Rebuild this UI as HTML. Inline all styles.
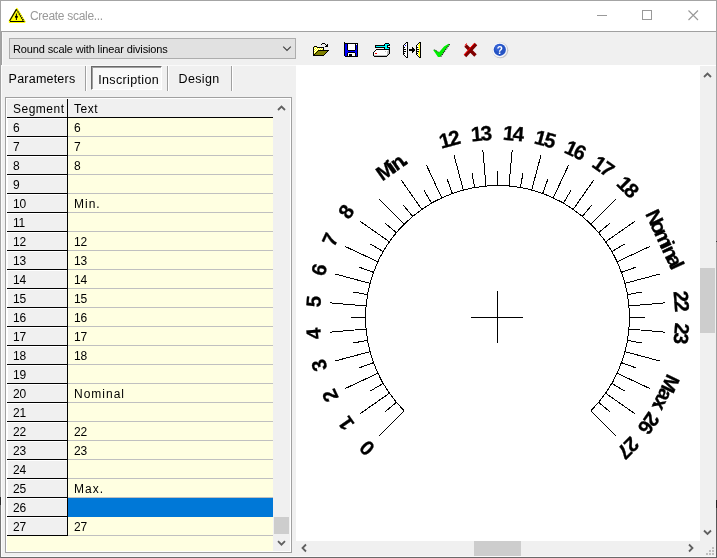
<!DOCTYPE html>
<html><head><meta charset="utf-8"><title>Create scale...</title>
<style>
html,body{margin:0;padding:0}
body{width:717px;height:558px;overflow:hidden;background:#f0f0f0;position:relative;font-family:"Liberation Sans",Arial,sans-serif;font-size:12px;color:#000}
#root{position:absolute;left:0;top:0;width:717px;height:558px;will-change:transform}
.abs,.dial,.icons{position:absolute}
.dial,.icons{left:0;top:0;pointer-events:none}
.win{position:absolute;left:0;top:0;width:715px;height:556px;border:1px solid #a4a4a4;border-bottom-color:#6a6a6a}
.title{position:absolute;left:1px;top:1px;width:715px;height:30px;background:#fff;border-bottom:1px solid #a0a0a0}
.title .t{position:absolute;left:29px;top:7px;font-size:12px;letter-spacing:-0.3px;color:#999;line-height:16px;white-space:nowrap}
.lb{position:absolute;left:1px;top:32px;width:1px;height:33px;background:#a0a0a0}
.lb2{position:absolute;left:2px;top:32px;width:1px;height:33px;background:#fafafa}
.combo{position:absolute;left:9px;top:38px;width:285px;height:19px;border:1px solid #adadad;background:#e1e1e1}
.combo .t{position:absolute;left:3px;top:4px;font-size:11px;letter-spacing:-.13px;line-height:13px;white-space:nowrap}
.tab{position:absolute;top:67px;height:24px;line-height:16px;font-size:12.5px;letter-spacing:.35px;white-space:nowrap}
.sep{position:absolute;top:66px;width:1px;height:25px;background:#a0a0a0;border-right:1px solid #fff}
.grid{position:absolute;left:5px;top:97px;width:285px;height:454px;border:1px solid #a0a0a0;background:#ffffe1}
.grid .in{position:absolute;left:0;top:0;right:0;bottom:0;border:1px solid #fff}
.hdr{position:absolute;top:99px;height:18px;background:#f0f0f0;border-bottom:1px solid #000;letter-spacing:.5px;line-height:20px}
.row{position:absolute;left:7px;width:266px;height:19px}
.seg{position:absolute;left:0;top:0;width:60px;height:18px;background:#f0f0f0;border-right:1px solid #000;border-bottom:1px solid #000;box-sizing:content-box;text-indent:6px;line-height:21px;letter-spacing:-.2px;box-shadow:inset 1px 1px 0 #fff}
.txt{position:absolute;left:61px;top:0;width:205px;height:18px;border-bottom:1px solid #c0c0c0;text-indent:6px;line-height:21px;letter-spacing:-.1px}
.txt.w{letter-spacing:1px}
.sel .txt{background:#0078d7;border-bottom-color:#0078d7}
.sb{position:absolute;background:#f0f0f0}
.thumb{position:absolute;background:#cdcdcd}
.panel{position:absolute;left:296px;top:65px;width:420px;height:476px;background:#fff}
</style></head><body><div id="root">
<div class="panel"></div>
<div class="title"><div class="t">Create scale...</div></div>
<div class="abs" style="left:1px;top:65px;width:295px;height:1px;background:#fafafa"></div>
<div class="lb"></div><div class="lb2"></div>
<div class="abs" style="left:1px;top:65px;width:1px;height:492px;background:#fcfcfc"></div>
<div class="combo"><div class="t">Round scale with linear divisions</div></div>
<div class="tab" style="left:8.6px;padding-top:4px;letter-spacing:.22px">Parameters</div>
<div class="sep" style="left:85px"></div>
<div class="abs" style="left:91px;top:66px;width:69px;height:22px;background:#f8f8f8;border:1px solid;border-color:#696969 #fff #fff #696969;box-shadow:inset 1px 1px 0 #a0a0a0"></div>
<div class="tab" style="left:98.2px;padding-top:5px">Inscription</div>
<div class="sep" style="left:167px"></div>
<div class="tab" style="left:178.5px;padding-top:4px">Design</div>
<div class="sep" style="left:231px"></div>
<div class="grid"><div class="in"></div></div>
<div class="hdr" style="left:7px;width:60px;border-right:1px solid #000;text-indent:6px">Segment</div>
<div class="hdr" style="left:68px;width:205px;text-indent:6px">Text</div>
<div class="row" style="top:118px"><div class="seg">6</div><div class="txt">6</div></div>
<div class="row" style="top:137px"><div class="seg">7</div><div class="txt">7</div></div>
<div class="row" style="top:156px"><div class="seg">8</div><div class="txt">8</div></div>
<div class="row" style="top:175px"><div class="seg">9</div><div class="txt"></div></div>
<div class="row" style="top:194px"><div class="seg">10</div><div class="txt w">Min.</div></div>
<div class="row" style="top:213px"><div class="seg">11</div><div class="txt"></div></div>
<div class="row" style="top:232px"><div class="seg">12</div><div class="txt">12</div></div>
<div class="row" style="top:251px"><div class="seg">13</div><div class="txt">13</div></div>
<div class="row" style="top:270px"><div class="seg">14</div><div class="txt">14</div></div>
<div class="row" style="top:289px"><div class="seg">15</div><div class="txt">15</div></div>
<div class="row" style="top:308px"><div class="seg">16</div><div class="txt">16</div></div>
<div class="row" style="top:327px"><div class="seg">17</div><div class="txt">17</div></div>
<div class="row" style="top:346px"><div class="seg">18</div><div class="txt">18</div></div>
<div class="row" style="top:365px"><div class="seg">19</div><div class="txt"></div></div>
<div class="row" style="top:384px"><div class="seg">20</div><div class="txt w">Nominal</div></div>
<div class="row" style="top:403px"><div class="seg">21</div><div class="txt"></div></div>
<div class="row" style="top:422px"><div class="seg">22</div><div class="txt">22</div></div>
<div class="row" style="top:441px"><div class="seg">23</div><div class="txt">23</div></div>
<div class="row" style="top:460px"><div class="seg">24</div><div class="txt"></div></div>
<div class="row" style="top:479px"><div class="seg">25</div><div class="txt w">Max.</div></div>
<div class="row sel" style="top:498px"><div class="seg">26</div><div class="txt"></div></div>
<div class="row" style="top:517px"><div class="seg">27</div><div class="txt">27</div></div>
<div class="sb" style="left:273px;top:99px;width:17px;height:452px"></div>
<div class="thumb" style="left:274px;top:517px;width:15px;height:17px"></div>
<div class="sb" style="left:700px;top:66px;width:16px;height:475px"></div>
<div class="thumb" style="left:700px;top:268px;width:15px;height:65px"></div>
<div class="sb" style="left:296px;top:541px;width:420px;height:15px"></div>
<div class="thumb" style="left:474px;top:541px;width:47px;height:15px"></div>
<svg class="dial" width="717" height="558" viewBox="0 0 717 558">
<g stroke="#000" stroke-width="1" fill="none" shape-rendering="crispEdges">
<path d="M404.16 410.84 A132 132 0 1 1 590.84 410.84"/>
<path d="M404.16 410.84L378.71 436.29M396.38 402.35L384.89 411.99M389.37 393.21L359.88 413.86M383.18 383.50L370.19 391.00M377.87 373.29L345.24 388.50M373.46 362.65L359.37 367.78M370.00 351.66L335.22 360.98M367.51 340.42L352.73 343.03M366.00 329.00L330.14 332.14M365.50 317.50L350.50 317.50M366.00 306.00L330.14 302.86M367.51 294.58L352.73 291.97M370.00 283.34L335.22 274.02M373.46 272.35L359.37 267.22M377.87 261.71L345.24 246.50M383.18 251.50L370.19 244.00M389.37 241.79L359.88 221.14M396.38 232.65L384.89 223.01M404.16 224.16L378.71 198.71M412.65 216.38L403.01 204.89M421.79 209.37L401.14 179.88M431.50 203.18L424.00 190.19M441.71 197.87L426.50 165.24M452.35 193.46L447.22 179.37M463.34 190.00L454.02 155.22M474.58 187.51L471.97 172.73M486.00 186.00L482.86 150.14M497.50 185.50L497.50 170.50M509.00 186.00L512.14 150.14M520.42 187.51L523.03 172.73M531.66 190.00L540.98 155.22M542.65 193.46L547.78 179.37M553.29 197.87L568.50 165.24M563.50 203.18L571.00 190.19M573.21 209.37L593.86 179.88M582.35 216.38L591.99 204.89M590.84 224.16L616.29 198.71M598.62 232.65L610.11 223.01M605.63 241.79L635.12 221.14M611.82 251.50L624.81 244.00M617.13 261.71L649.76 246.50M621.54 272.35L635.63 267.22M625.00 283.34L659.78 274.02M627.49 294.58L642.27 291.97M629.00 306.00L664.86 302.86M629.50 317.50L644.50 317.50M629.00 329.00L664.86 332.14M627.49 340.42L642.27 343.03M625.00 351.66L659.78 360.98M621.54 362.65L635.63 367.78M617.13 373.29L649.76 388.50M611.82 383.50L624.81 391.00M605.63 393.21L635.12 413.86M598.62 402.35L610.11 411.99M590.84 410.84L616.29 436.29"/>
<path d="M471 317.5H523M497.5 291V343"/>
</g>
<g font-family="Liberation Sans, Arial, sans-serif" font-weight="bold" font-size="20.5" fill="#000" stroke="#000" stroke-width="0.3">
<text transform="translate(371.99 443.01) rotate(-135)" x="-5.70">0</text>
<text transform="translate(352.10 419.31) rotate(-125)" x="-5.70">1</text>
<text transform="translate(336.63 392.51) rotate(-115)" x="-5.70">2</text>
<text transform="translate(326.05 363.44) rotate(-105)" x="-5.70">3</text>
<text transform="translate(320.68 332.97) rotate(-95)" x="-5.70">4</text>
<text transform="translate(320.68 302.03) rotate(-85)" x="-5.70">5</text>
<text transform="translate(326.05 271.56) rotate(-75)" x="-5.70">6</text>
<text transform="translate(336.63 242.49) rotate(-65)" x="-5.70">7</text>
<text transform="translate(352.10 215.69) rotate(-55)" x="-5.70">8</text>
<text transform="translate(395.69 172.10) rotate(-35)" x="-16.44 -3.29 1.10 10.74">Min.</text>
<text transform="translate(451.56 146.05) rotate(-15)" x="-10.60 -0.80">12</text>
<text transform="translate(482.03 140.68) rotate(-5)" x="-10.60 -0.80">13</text>
<text transform="translate(512.97 140.68) rotate(5)" x="-10.60 -0.80">14</text>
<text transform="translate(543.44 146.05) rotate(15)" x="-10.60 -0.80">15</text>
<text transform="translate(572.51 156.63) rotate(25)" x="-10.60 -0.80">16</text>
<text transform="translate(599.31 172.10) rotate(35)" x="-10.60 -0.80">17</text>
<text transform="translate(623.01 191.99) rotate(45)" x="-10.60 -0.80">18</text>
<text transform="translate(658.37 242.49) rotate(65)" x="-31.79 -20.39 -10.75 3.29 7.67 17.32 26.09">Nominal</text>
<text transform="translate(674.32 302.03) rotate(85)" x="-10.60 -0.80">22</text>
<text transform="translate(674.32 332.97) rotate(95)" x="-10.60 -0.80">23</text>
<text transform="translate(658.37 392.51) rotate(115)" x="-21.50 -6.10 4.20 9.20">Max.</text>
<text transform="translate(642.90 419.31) rotate(125)" x="-10.60 -0.80">26</text>
<text transform="translate(623.01 443.01) rotate(135)" x="-10.60 -0.80">27</text>
</g></svg>
<svg class="icons" width="717" height="558" viewBox="0 0 717 558" shape-rendering="crispEdges"><rect x="322" y="43" width="3" height="1" fill="#000"/><rect x="321" y="44" width="1" height="1" fill="#000"/><rect x="325" y="44" width="1" height="1" fill="#000"/><rect x="327" y="44" width="1" height="1" fill="#000"/><rect x="326" y="45" width="2" height="1" fill="#000"/><rect x="314" y="46" width="3" height="1" fill="#000"/><rect x="325" y="46" width="3" height="1" fill="#000"/><rect x="313" y="47" width="1" height="1" fill="#000"/><rect x="314" y="47" width="1" height="1" fill="#ffff00"/><rect x="315" y="47" width="1" height="1" fill="#fff"/><rect x="316" y="47" width="1" height="1" fill="#ffff00"/><rect x="317" y="47" width="7" height="1" fill="#000"/><rect x="313" y="48" width="1" height="1" fill="#000"/><rect x="314" y="48" width="1" height="1" fill="#fff"/><rect x="315" y="48" width="1" height="1" fill="#ffff00"/><rect x="316" y="48" width="1" height="1" fill="#fff"/><rect x="317" y="48" width="1" height="1" fill="#ffff00"/><rect x="318" y="48" width="1" height="1" fill="#fff"/><rect x="319" y="48" width="1" height="1" fill="#ffff00"/><rect x="320" y="48" width="1" height="1" fill="#fff"/><rect x="321" y="48" width="1" height="1" fill="#ffff00"/><rect x="322" y="48" width="1" height="1" fill="#fff"/><rect x="323" y="48" width="1" height="1" fill="#000"/><rect x="313" y="49" width="1" height="1" fill="#000"/><rect x="314" y="49" width="1" height="1" fill="#ffff00"/><rect x="315" y="49" width="1" height="1" fill="#fff"/><rect x="316" y="49" width="1" height="1" fill="#ffff00"/><rect x="317" y="49" width="1" height="1" fill="#fff"/><rect x="318" y="49" width="1" height="1" fill="#ffff00"/><rect x="319" y="49" width="1" height="1" fill="#fff"/><rect x="320" y="49" width="1" height="1" fill="#ffff00"/><rect x="321" y="49" width="1" height="1" fill="#fff"/><rect x="322" y="49" width="1" height="1" fill="#ffff00"/><rect x="323" y="49" width="1" height="1" fill="#000"/><rect x="313" y="50" width="1" height="1" fill="#000"/><rect x="314" y="50" width="1" height="1" fill="#fff"/><rect x="315" y="50" width="1" height="1" fill="#ffff00"/><rect x="316" y="50" width="1" height="1" fill="#fff"/><rect x="317" y="50" width="1" height="1" fill="#ffff00"/><rect x="318" y="50" width="11" height="1" fill="#000"/><rect x="313" y="51" width="1" height="1" fill="#000"/><rect x="314" y="51" width="1" height="1" fill="#ffff00"/><rect x="315" y="51" width="1" height="1" fill="#fff"/><rect x="316" y="51" width="1" height="1" fill="#ffff00"/><rect x="317" y="51" width="1" height="1" fill="#000"/><rect x="318" y="51" width="9" height="1" fill="#808000"/><rect x="327" y="51" width="1" height="1" fill="#000"/><rect x="313" y="52" width="1" height="1" fill="#000"/><rect x="314" y="52" width="1" height="1" fill="#fff"/><rect x="315" y="52" width="1" height="1" fill="#ffff00"/><rect x="316" y="52" width="1" height="1" fill="#000"/><rect x="317" y="52" width="9" height="1" fill="#808000"/><rect x="326" y="52" width="1" height="1" fill="#000"/><rect x="313" y="53" width="1" height="1" fill="#000"/><rect x="314" y="53" width="1" height="1" fill="#ffff00"/><rect x="315" y="53" width="1" height="1" fill="#000"/><rect x="316" y="53" width="9" height="1" fill="#808000"/><rect x="325" y="53" width="1" height="1" fill="#000"/><rect x="313" y="54" width="2" height="1" fill="#000"/><rect x="315" y="54" width="9" height="1" fill="#808000"/><rect x="324" y="54" width="1" height="1" fill="#000"/><rect x="313" y="55" width="11" height="1" fill="#000"/><rect x="344" y="42" width="1" height="1" fill="#000"/><rect x="344" y="43" width="14" height="1" fill="#000"/><rect x="344" y="44" width="1" height="1" fill="#000"/><rect x="345" y="44" width="2" height="1" fill="#0000ff"/><rect x="347" y="44" width="1" height="1" fill="#000"/><rect x="348" y="44" width="7" height="1" fill="#fff"/><rect x="355" y="44" width="1" height="1" fill="#000"/><rect x="356" y="44" width="1" height="1" fill="#fff"/><rect x="357" y="44" width="1" height="1" fill="#000"/><rect x="344" y="45" width="1" height="1" fill="#000"/><rect x="345" y="45" width="2" height="1" fill="#0000ff"/><rect x="347" y="45" width="1" height="1" fill="#000"/><rect x="348" y="45" width="7" height="1" fill="#fff"/><rect x="355" y="45" width="1" height="1" fill="#000"/><rect x="356" y="45" width="1" height="1" fill="#0000ff"/><rect x="357" y="45" width="1" height="1" fill="#000"/><rect x="344" y="46" width="1" height="1" fill="#000"/><rect x="345" y="46" width="2" height="1" fill="#0000ff"/><rect x="347" y="46" width="1" height="1" fill="#000"/><rect x="348" y="46" width="7" height="1" fill="#fff"/><rect x="355" y="46" width="1" height="1" fill="#000"/><rect x="356" y="46" width="1" height="1" fill="#0000ff"/><rect x="357" y="46" width="1" height="1" fill="#000"/><rect x="344" y="47" width="1" height="1" fill="#000"/><rect x="345" y="47" width="2" height="1" fill="#0000ff"/><rect x="347" y="47" width="1" height="1" fill="#000"/><rect x="348" y="47" width="7" height="1" fill="#fff"/><rect x="355" y="47" width="1" height="1" fill="#000"/><rect x="356" y="47" width="1" height="1" fill="#0000ff"/><rect x="357" y="47" width="1" height="1" fill="#000"/><rect x="344" y="48" width="1" height="1" fill="#000"/><rect x="345" y="48" width="2" height="1" fill="#0000ff"/><rect x="347" y="48" width="1" height="1" fill="#000"/><rect x="348" y="48" width="7" height="1" fill="#fff"/><rect x="355" y="48" width="1" height="1" fill="#000"/><rect x="356" y="48" width="1" height="1" fill="#0000ff"/><rect x="357" y="48" width="1" height="1" fill="#000"/><rect x="344" y="49" width="1" height="1" fill="#000"/><rect x="345" y="49" width="2" height="1" fill="#0000ff"/><rect x="347" y="49" width="1" height="1" fill="#000"/><rect x="348" y="49" width="7" height="1" fill="#fff"/><rect x="355" y="49" width="1" height="1" fill="#000"/><rect x="356" y="49" width="1" height="1" fill="#0000ff"/><rect x="357" y="49" width="1" height="1" fill="#000"/><rect x="344" y="50" width="1" height="1" fill="#000"/><rect x="345" y="50" width="3" height="1" fill="#0000ff"/><rect x="348" y="50" width="7" height="1" fill="#000"/><rect x="355" y="50" width="2" height="1" fill="#0000ff"/><rect x="357" y="50" width="1" height="1" fill="#000"/><rect x="344" y="51" width="1" height="1" fill="#000"/><rect x="345" y="51" width="12" height="1" fill="#0000ff"/><rect x="357" y="51" width="1" height="1" fill="#000"/><rect x="344" y="52" width="1" height="1" fill="#000"/><rect x="345" y="52" width="3" height="1" fill="#0000ff"/><rect x="348" y="52" width="7" height="1" fill="#000"/><rect x="355" y="52" width="2" height="1" fill="#0000ff"/><rect x="357" y="52" width="1" height="1" fill="#000"/><rect x="344" y="53" width="1" height="1" fill="#000"/><rect x="345" y="53" width="2" height="1" fill="#0000ff"/><rect x="347" y="53" width="1" height="1" fill="#000"/><rect x="348" y="53" width="7" height="1" fill="#fff"/><rect x="355" y="53" width="1" height="1" fill="#000"/><rect x="356" y="53" width="1" height="1" fill="#0000ff"/><rect x="357" y="53" width="1" height="1" fill="#000"/><rect x="344" y="54" width="1" height="1" fill="#000"/><rect x="345" y="54" width="2" height="1" fill="#0000ff"/><rect x="347" y="54" width="1" height="1" fill="#000"/><rect x="348" y="54" width="1" height="1" fill="#fff"/><rect x="349" y="54" width="3" height="1" fill="#000"/><rect x="352" y="54" width="3" height="1" fill="#fff"/><rect x="355" y="54" width="1" height="1" fill="#000"/><rect x="356" y="54" width="1" height="1" fill="#0000ff"/><rect x="357" y="54" width="1" height="1" fill="#000"/><rect x="344" y="55" width="1" height="1" fill="#000"/><rect x="345" y="55" width="2" height="1" fill="#0000ff"/><rect x="347" y="55" width="1" height="1" fill="#000"/><rect x="348" y="55" width="1" height="1" fill="#fff"/><rect x="349" y="55" width="3" height="1" fill="#000"/><rect x="352" y="55" width="3" height="1" fill="#fff"/><rect x="355" y="55" width="1" height="1" fill="#000"/><rect x="356" y="55" width="1" height="1" fill="#0000ff"/><rect x="357" y="55" width="1" height="1" fill="#000"/><rect x="345" y="56" width="13" height="1" fill="#000"/><rect x="385" y="43" width="4" height="1" fill="#000"/><rect x="384" y="44" width="1" height="1" fill="#000"/><rect x="385" y="44" width="4" height="1" fill="#00ffff"/><rect x="389" y="44" width="1" height="1" fill="#000"/><rect x="375" y="45" width="10" height="1" fill="#000"/><rect x="385" y="45" width="2" height="1" fill="#00ffff"/><rect x="387" y="45" width="3" height="1" fill="#000"/><rect x="375" y="46" width="1" height="1" fill="#000"/><rect x="376" y="46" width="11" height="1" fill="#00ffff"/><rect x="387" y="46" width="1" height="1" fill="#000"/><rect x="375" y="47" width="10" height="1" fill="#000"/><rect x="385" y="47" width="2" height="1" fill="#00ffff"/><rect x="387" y="47" width="3" height="1" fill="#000"/><rect x="384" y="48" width="1" height="1" fill="#000"/><rect x="385" y="48" width="4" height="1" fill="#00ffff"/><rect x="389" y="48" width="1" height="1" fill="#000"/><rect x="376" y="49" width="14" height="1" fill="#000"/><rect x="375" y="50" width="1" height="1" fill="#000"/><rect x="376" y="50" width="12" height="1" fill="#fff"/><rect x="388" y="50" width="1" height="1" fill="#c0c0c0"/><rect x="389" y="50" width="1" height="1" fill="#000"/><rect x="374" y="51" width="1" height="1" fill="#000"/><rect x="375" y="51" width="10" height="1" fill="#fff"/><rect x="385" y="51" width="1" height="1" fill="#c0c0c0"/><rect x="386" y="51" width="1" height="1" fill="#fff"/><rect x="387" y="51" width="2" height="1" fill="#c0c0c0"/><rect x="389" y="51" width="1" height="1" fill="#000"/><rect x="373" y="52" width="1" height="1" fill="#000"/><rect x="374" y="52" width="13" height="1" fill="#fff"/><rect x="387" y="52" width="2" height="1" fill="#c0c0c0"/><rect x="389" y="52" width="1" height="1" fill="#000"/><rect x="373" y="53" width="1" height="1" fill="#000"/><rect x="374" y="53" width="1" height="1" fill="#fff"/><rect x="375" y="53" width="2" height="1" fill="#ff0000"/><rect x="377" y="53" width="10" height="1" fill="#fff"/><rect x="387" y="53" width="2" height="1" fill="#c0c0c0"/><rect x="389" y="53" width="1" height="1" fill="#000"/><rect x="373" y="54" width="1" height="1" fill="#000"/><rect x="374" y="54" width="13" height="1" fill="#fff"/><rect x="387" y="54" width="1" height="1" fill="#c0c0c0"/><rect x="388" y="54" width="1" height="1" fill="#000"/><rect x="373" y="55" width="1" height="1" fill="#000"/><rect x="374" y="55" width="13" height="1" fill="#c0c0c0"/><rect x="387" y="55" width="1" height="1" fill="#000"/><rect x="374" y="56" width="13" height="1" fill="#000"/><rect x="406" y="42" width="2" height="1" fill="#000"/><rect x="405" y="43" width="1" height="1" fill="#000"/><rect x="406" y="43" width="1" height="1" fill="#fff"/><rect x="407" y="43" width="1" height="1" fill="#000"/><rect x="404" y="44" width="1" height="1" fill="#000"/><rect x="405" y="44" width="2" height="1" fill="#fff"/><rect x="407" y="44" width="1" height="1" fill="#000"/><rect x="403" y="45" width="1" height="1" fill="#000"/><rect x="404" y="45" width="1" height="1" fill="#fff"/><rect x="405" y="45" width="1" height="1" fill="#0000ff"/><rect x="406" y="45" width="1" height="1" fill="#fff"/><rect x="407" y="45" width="1" height="1" fill="#000"/><rect x="403" y="46" width="1" height="1" fill="#000"/><rect x="404" y="46" width="3" height="1" fill="#fff"/><rect x="407" y="46" width="1" height="1" fill="#000"/><rect x="403" y="47" width="2" height="1" fill="#000"/><rect x="405" y="47" width="2" height="1" fill="#fff"/><rect x="407" y="47" width="1" height="1" fill="#000"/><rect x="403" y="48" width="1" height="1" fill="#000"/><rect x="404" y="48" width="3" height="1" fill="#fff"/><rect x="407" y="48" width="1" height="1" fill="#000"/><rect x="403" y="49" width="3" height="1" fill="#000"/><rect x="406" y="49" width="1" height="1" fill="#fff"/><rect x="407" y="49" width="1" height="1" fill="#000"/><rect x="403" y="50" width="1" height="1" fill="#000"/><rect x="404" y="50" width="3" height="1" fill="#fff"/><rect x="407" y="50" width="1" height="1" fill="#000"/><rect x="403" y="51" width="3" height="1" fill="#000"/><rect x="406" y="51" width="1" height="1" fill="#fff"/><rect x="407" y="51" width="1" height="1" fill="#000"/><rect x="403" y="52" width="1" height="1" fill="#000"/><rect x="404" y="52" width="3" height="1" fill="#fff"/><rect x="407" y="52" width="1" height="1" fill="#000"/><rect x="403" y="53" width="2" height="1" fill="#000"/><rect x="405" y="53" width="2" height="1" fill="#fff"/><rect x="407" y="53" width="1" height="1" fill="#000"/><rect x="403" y="54" width="1" height="1" fill="#000"/><rect x="404" y="54" width="3" height="1" fill="#fff"/><rect x="407" y="54" width="1" height="1" fill="#000"/><rect x="404" y="55" width="1" height="1" fill="#000"/><rect x="405" y="55" width="2" height="1" fill="#fff"/><rect x="407" y="55" width="1" height="1" fill="#000"/><rect x="405" y="56" width="1" height="1" fill="#000"/><rect x="406" y="56" width="1" height="1" fill="#fff"/><rect x="407" y="56" width="1" height="1" fill="#000"/><rect x="406" y="57" width="2" height="1" fill="#000"/><rect x="412" y="47" width="1" height="1" fill="#000"/><rect x="412" y="48" width="2" height="1" fill="#000"/><rect x="409" y="49" width="6" height="1" fill="#000"/><rect x="409" y="50" width="6" height="1" fill="#000"/><rect x="412" y="51" width="2" height="1" fill="#000"/><rect x="412" y="52" width="1" height="1" fill="#000"/><rect x="419" y="42" width="2" height="1" fill="#000"/><rect x="418" y="43" width="1" height="1" fill="#000"/><rect x="419" y="43" width="1" height="1" fill="#ffff00"/><rect x="420" y="43" width="1" height="1" fill="#000"/><rect x="417" y="44" width="1" height="1" fill="#000"/><rect x="418" y="44" width="1" height="1" fill="#fff"/><rect x="419" y="44" width="1" height="1" fill="#ffff00"/><rect x="420" y="44" width="1" height="1" fill="#000"/><rect x="416" y="45" width="1" height="1" fill="#000"/><rect x="417" y="45" width="1" height="1" fill="#fff"/><rect x="418" y="45" width="2" height="1" fill="#ffff00"/><rect x="420" y="45" width="1" height="1" fill="#000"/><rect x="416" y="46" width="1" height="1" fill="#000"/><rect x="417" y="46" width="2" height="1" fill="#fff"/><rect x="419" y="46" width="1" height="1" fill="#ffff00"/><rect x="420" y="46" width="1" height="1" fill="#000"/><rect x="416" y="47" width="2" height="1" fill="#000"/><rect x="418" y="47" width="2" height="1" fill="#ffff00"/><rect x="420" y="47" width="1" height="1" fill="#000"/><rect x="416" y="48" width="1" height="1" fill="#000"/><rect x="417" y="48" width="2" height="1" fill="#fff"/><rect x="419" y="48" width="1" height="1" fill="#ffff00"/><rect x="420" y="48" width="1" height="1" fill="#000"/><rect x="416" y="49" width="3" height="1" fill="#000"/><rect x="419" y="49" width="1" height="1" fill="#ffff00"/><rect x="420" y="49" width="1" height="1" fill="#000"/><rect x="416" y="50" width="1" height="1" fill="#000"/><rect x="417" y="50" width="2" height="1" fill="#fff"/><rect x="419" y="50" width="1" height="1" fill="#ffff00"/><rect x="420" y="50" width="1" height="1" fill="#000"/><rect x="416" y="51" width="3" height="1" fill="#000"/><rect x="419" y="51" width="1" height="1" fill="#ffff00"/><rect x="420" y="51" width="1" height="1" fill="#000"/><rect x="416" y="52" width="1" height="1" fill="#000"/><rect x="417" y="52" width="1" height="1" fill="#fff"/><rect x="418" y="52" width="2" height="1" fill="#ffff00"/><rect x="420" y="52" width="1" height="1" fill="#000"/><rect x="416" y="53" width="2" height="1" fill="#000"/><rect x="418" y="53" width="1" height="1" fill="#fff"/><rect x="419" y="53" width="1" height="1" fill="#ffff00"/><rect x="420" y="53" width="1" height="1" fill="#000"/><rect x="416" y="54" width="1" height="1" fill="#000"/><rect x="417" y="54" width="1" height="1" fill="#fff"/><rect x="418" y="54" width="2" height="1" fill="#ffff00"/><rect x="420" y="54" width="1" height="1" fill="#000"/><rect x="417" y="55" width="1" height="1" fill="#000"/><rect x="418" y="55" width="1" height="1" fill="#fff"/><rect x="419" y="55" width="1" height="1" fill="#ffff00"/><rect x="420" y="55" width="1" height="1" fill="#000"/><rect x="418" y="56" width="1" height="1" fill="#000"/><rect x="419" y="56" width="1" height="1" fill="#ffff00"/><rect x="420" y="56" width="1" height="1" fill="#000"/><rect x="419" y="57" width="2" height="1" fill="#000"/></svg>
<svg class="icons" width="717" height="558" viewBox="0 0 717 558">
<path d="M433 49.8 L436 50.3 L438.8 52.6 L444 46.6 L448.6 43.8 L449.4 44.4 L440.2 57 L438 57 L435.6 53.6 Z" fill="#00f000"/>
<path d="M449.6 44.3 L440.3 57.2" fill="none" stroke="#000" stroke-width="1.1" stroke-dasharray="1 1"/>
<path d="M434.5 49.7 L438.8 52.3" fill="none" stroke="#000" stroke-width=".9" stroke-dasharray="1 1.2"/>
<path d="M465.5 45.5 L475.5 55.5 M476 44 L465 56" fill="none" stroke="#800000" stroke-width="3.4" stroke-linecap="butt"/>
<path d="M464.8 45.3 L467 43.5 M464 55 L474.5 43.2" fill="none" stroke="#ff0000" stroke-width="1"/>
<circle cx="500.3" cy="50.3" r="8" fill="#8c8c98" opacity=".45"/>
<circle cx="499.7" cy="49.7" r="7.5" fill="#f4f6fb"/>
<circle cx="499.8" cy="49.8" r="6.1" fill="#2553c4"/>
<circle cx="498.6" cy="47.8" r="3.6" fill="#3d6be0" opacity=".6"/>
<text x="499.9" y="53.6" font-family="Liberation Sans, sans-serif" font-weight="bold" font-size="10" fill="#fff" text-anchor="middle">?</text>
</svg>
<svg class="icons" width="717" height="558" viewBox="0 0 717 558">
<g fill="none" stroke="#999" stroke-width="1" shape-rendering="crispEdges">
<path d="M597 15.5H607"/><rect x="642.5" y="10.5" width="9" height="9"/>
</g>
<path d="M688.5 10.5L698 20M698 10.5L688.5 20" stroke="#999" stroke-width="1.15" fill="none"/>
<g fill="none" stroke="#606060" stroke-width="1.8">
<path d="M278 110L281.5 106.5L285 110"/>
<path d="M278 541.2L281.5 544.7L285 541.2"/>
<path d="M704 77L707.5 73.5L711 77"/>
<path d="M704 530.5L707.5 534L711 530.5"/>
<path d="M306 544.5L302.5 548L306 551.5"/>
<path d="M689 544.5L692.5 548L689 551.5"/>
<path d="M283.2 46.7L287 50.5L290.8 46.7" stroke-width="1.15" stroke="#404040"/>
</g>
<g fill="#bfbfbf" shape-rendering="crispEdges">
<rect x="712" y="547" width="2" height="2"/><rect x="712" y="550" width="2" height="2"/><rect x="712" y="553" width="2" height="2"/>
<rect x="709" y="550" width="2" height="2"/><rect x="709" y="553" width="2" height="2"/><rect x="706" y="553" width="2" height="2"/>
</g>
<path d="M9.4 22.3L9.4 20.6L16.9 8.4L24.8 21.4L24.8 22.3Z" fill="#ffff00" stroke="#ffff00" stroke-width="1.2" stroke-linejoin="round"/>
<path d="M9.5 21.5H23.5" stroke="#000" stroke-width="1" shape-rendering="crispEdges"/>
<path d="M9.6 21L16.4 9.4" stroke="#000" stroke-width="1.1"/>
<path d="M16.4 9.4L23.6 21.4" stroke="#000" stroke-width="1.1" stroke-dasharray="1.6 .7"/>
<path d="M18.6 11.5L25 22" stroke="#222" stroke-width=".9" stroke-dasharray=".9 1.3"/>
<path d="M16.4 13.5V20" stroke="#000" stroke-width="1"/>
<path d="M15 16.8H17.8" stroke="#000" stroke-width="1.8"/>
</svg>
<div class="win"></div>
<div class="abs" style="left:0;top:497px;width:1px;height:8px;background:#2a2a2a"></div>
<div class="abs" style="left:0;top:505px;width:1px;height:53px;background:#777"></div>
<div class="abs" style="left:716px;top:500px;width:1px;height:8px;background:#222"></div>
<div class="abs" style="left:716px;top:508px;width:1px;height:50px;background:#5a5a5a"></div>
<div class="abs" style="left:716px;top:241px;width:1px;height:1px;background:#333"></div>
<div class="abs" style="left:1px;top:556px;width:715px;height:1px;background:#f8f8f8"></div>
</div></body></html>
